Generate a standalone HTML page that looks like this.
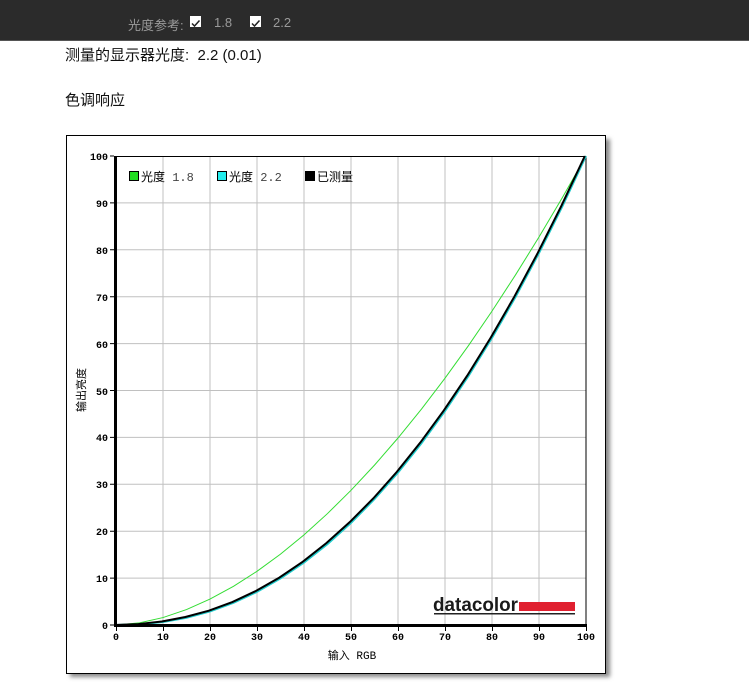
<!DOCTYPE html>
<html><head><meta charset="utf-8"><style>
body{margin:0;width:749px;height:698px;background:#fff;position:relative;overflow:hidden;font-family:"Liberation Sans","Noto Sans CJK SC",sans-serif}
.bar{position:absolute;left:0;top:0;width:749px;height:40px;background:#2b2b2b;border-bottom:1px solid #555}
.t{position:absolute;font-size:13px;color:#9a9a9a;top:15px}
.cb{position:absolute;top:16px;width:11px;height:11px;background:#fff}
.p{position:absolute;left:65px;font-size:15px;color:#111}
</style></head><body>
<div class="bar">
<span class="t" style="left:128px">光度参考:</span>
<div class="cb" style="left:190px"><svg width="11" height="11"><path d="M2 5.5L4.5 8L9.5 2.5" stroke="#222" stroke-width="1.5" fill="none"/></svg></div>
<span class="t" style="left:214px">1.8</span>
<div class="cb" style="left:250px"><svg width="11" height="11"><path d="M2 5.5L4.5 8L9.5 2.5" stroke="#222" stroke-width="1.5" fill="none"/></svg></div>
<span class="t" style="left:273px">2.2</span>
</div>
<div class="p" style="top:44px">测量的显示器光度:&nbsp; 2.2 (0.01)</div>
<div class="p" style="top:89px">色调响应</div>
<svg style="position:absolute;left:0;top:0" width="749" height="698">
<defs><filter id="sh"><feGaussianBlur stdDeviation="2"/></filter></defs>
<rect x="70" y="139" width="540" height="538" fill="#888" filter="url(#sh)"/>
<rect x="66.5" y="135.5" width="539" height="538" fill="#fff" stroke="#000"/>
<g stroke="#c0c0c0" stroke-width="1">
<path d="M163 156V625M210 156V625M257 156V625M304 156V625M351 156V625M398 156V625M445 156V625M492 156V625M539 156V625"/>
<path d="M116 202.9H586M116 249.8H586M116 296.7H586M116 343.6H586M116 390.5H586M116 437.4H586M116 484.3H586M116 531.2H586M116 578.1H586"/>
</g>
<rect x="116" y="156" width="470" height="1" fill="#000"/>
<rect x="585.5" y="156" width="1" height="469" fill="#000"/>
<g transform="translate(116,625) scale(4.7,-4.69)" fill="none">
<polyline vector-effect="non-scaling-stroke" stroke="#33dd33" stroke-width="1" points="0,0 5,0.455 10,1.585 15,3.29 20,5.52 25,8.25 30,11.45 35,15.11 40,19.22 45,23.76 50,28.72 55,34.09 60,39.87 65,46.05 70,52.62 75,59.58 80,66.92 85,74.64 90,82.72 95,91.18 100,100"/>
<polyline vector-effect="non-scaling-stroke" stroke="#22cccc" stroke-width="2" points="0,0 5,0.137 10,0.631 15,1.54 20,2.9 25,4.74 30,7.07 35,9.93 40,13.32 45,17.26 50,21.76 55,26.84 60,32.5 65,38.76 70,45.63 75,53.1 80,61.21 85,69.94 90,79.31 95,89.33 100,100"/>
<polyline vector-effect="non-scaling-stroke" stroke="#000" stroke-width="2" transform="translate(-0.25,0)" points="0,0 5,0.2 10,0.75 15,1.7 20,3.05 25,4.9 30,7.25 35,10.1 40,13.5 45,17.45 50,21.95 55,27 60,32.65 65,38.9 70,45.75 75,53.2 80,61.3 85,70 90,79.35 95,89.35 100,100"/>
</g>
<rect x="114" y="156" width="3" height="471" fill="#000"/>
<rect x="114" y="624" width="473" height="3" fill="#000"/>
<g stroke="#000"><path d="M110 156H114M110 202.9H114M110 249.8H114M110 296.7H114M110 343.6H114M110 390.5H114M110 437.4H114M110 484.3H114M110 531.2H114M110 578.1H114M110 625H114"/>
<path d="M116.5 627V631M163.5 627V631M210.5 627V631M257.5 627V631M304.5 627V631M351.5 627V631M398.5 627V631M445.5 627V631M492.5 627V631M539.5 627V631M586.5 627V631"/></g>
<g font-family="Liberation Mono,monospace" font-size="10" fill="#000" text-anchor="end" font-weight="bold">
<text x="108" y="160">100</text><text x="108" y="207">90</text><text x="108" y="254">80</text><text x="108" y="301">70</text><text x="108" y="348">60</text><text x="108" y="395">50</text><text x="108" y="441">40</text><text x="108" y="488">30</text><text x="108" y="535">20</text><text x="108" y="582">10</text><text x="108" y="629">0</text>
</g>
<g font-family="Liberation Mono,monospace" font-size="10" fill="#000" text-anchor="middle" font-weight="bold">
<text x="116" y="640">0</text><text x="163" y="640">10</text><text x="210" y="640">20</text><text x="257" y="640">30</text><text x="304" y="640">40</text><text x="351" y="640">50</text><text x="398" y="640">60</text><text x="445" y="640">70</text><text x="492" y="640">80</text><text x="539" y="640">90</text><text x="586" y="640">100</text>
</g>
<text x="352" y="659" font-size="11" text-anchor="middle" font-family="Liberation Mono,Noto Sans CJK SC,monospace">输入 RGB</text>
<text transform="translate(85,390) rotate(-90)" font-size="11" text-anchor="middle" font-family="Noto Sans CJK SC,sans-serif">输出亮度</text>
<rect x="129.5" y="171.5" width="9" height="9" fill="#22dd22" stroke="#000"/>
<text x="141" y="181" font-size="12" font-family="Liberation Mono,Noto Sans CJK SC,monospace">光度 <tspan fill="#444">1.8</tspan></text>
<rect x="217.5" y="171.5" width="9" height="9" fill="#22eeee" stroke="#000"/>
<text x="229" y="181" font-size="12" font-family="Liberation Mono,Noto Sans CJK SC,monospace">光度 <tspan fill="#444">2.2</tspan></text>
<rect x="305" y="171" width="10" height="10" fill="#000"/>
<text x="317" y="181" font-size="12" font-family="Noto Sans CJK SC,sans-serif">已测量</text>
<text x="433" y="611" font-size="19" font-weight="bold" font-family="Liberation Sans,sans-serif" fill="#1a1a1a" textLength="85" lengthAdjust="spacingAndGlyphs">datacolor</text>
<rect x="519" y="602" width="56" height="9" fill="#e02030"/>
<rect x="434" y="613" width="141" height="1.5" fill="#222"/>
</svg>
</body></html>
